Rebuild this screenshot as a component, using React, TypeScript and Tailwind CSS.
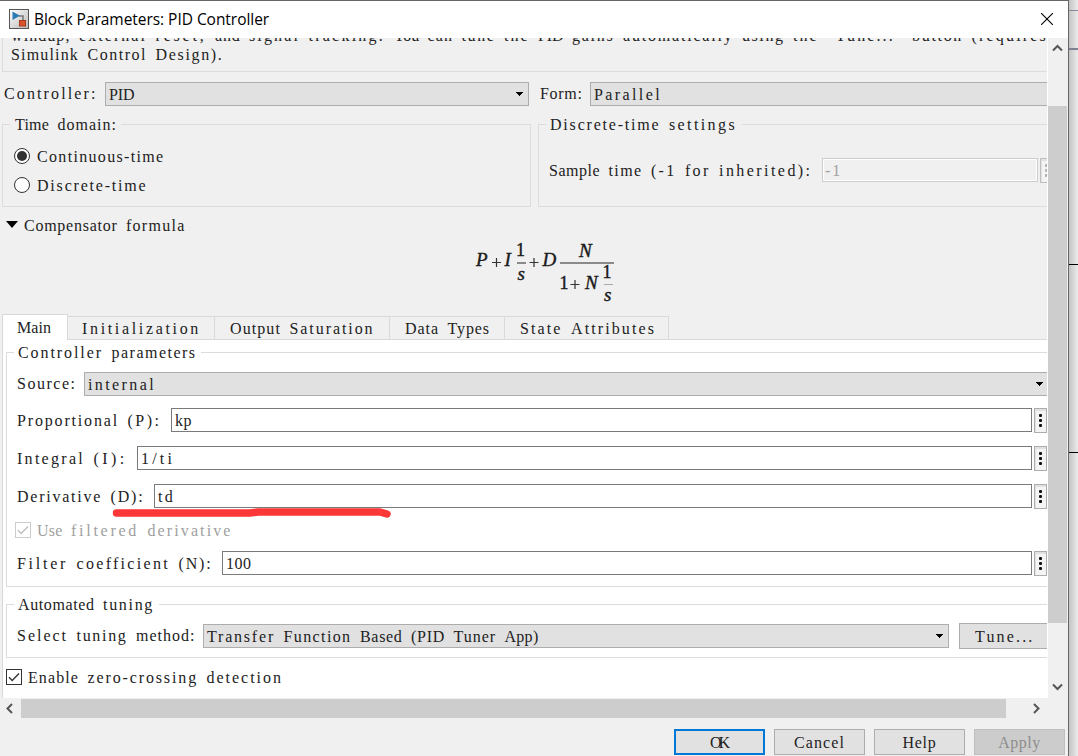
import React from 'react';

// Dialog text sits on a fixed character grid
const PITCH = 8.5;
const GRID_FONT = '16px "Liberation Serif", serif';

const ctx = document.createElement('canvas').getContext('2d')!;

const measure = (text: string) => {
  ctx.font = GRID_FONT;
  return ctx.measureText(text).width;
};

const Txt: React.FC<{ children: string; className?: string }> = ({ children, className = '' }) => {
  const words = children.split(' ');
  return (
    <span
      className={`block h-[19px] shrink-0 whitespace-pre font-['Liberation_Serif',serif] text-[16px] leading-[19px] ${className}`}
      style={{ wordSpacing: PITCH - measure(' ') }}
    >
      {words.map((word, i) => (
        <React.Fragment key={i}>
          {i > 0 && ' '}
          <span style={{ letterSpacing: (word.length * PITCH - measure(word)) / Math.max(word.length, 1) }}>{word}</span>
        </React.Fragment>
      ))}
    </span>
  );
};

const Arrow: React.FC = () => (
  <svg width="7" height="4" className="mt-[7px] shrink-0" shapeRendering="crispEdges">
    <path d="M0 0h7v1H0zM1 1h5v1H1zM2 2h3v1H2zM3 3h1v1H3z" fill="#000" />
  </svg>
);

const Combo: React.FC<{ value: string; className: string }> = ({ value, className }) => (
  <div className={`flex h-6 shrink-0 justify-between border border-[#adadad] bg-[#e1e1e1] pl-[3px] pr-[5px] pt-[2px] ${className}`}>
    <Txt>{value}</Txt>
    <Arrow />
  </div>
);

const Dots: React.FC<{ disabled?: boolean }> = ({ disabled }) => (
  <div
    className={`flex h-[25px] w-[13px] shrink-0 flex-col items-center gap-[2px] border bg-[#f4f4f4] pt-[5px] shadow-[inset_1px_2px_0_#e1e1e1] ${
      disabled ? 'border-[#bfbfbf] text-[#b0b0b0]' : 'border-[#adadad] text-[#111]'
    }`}
  >
    <i className="h-[3px] w-[3px] rounded-[1px] bg-current" />
    <i className="h-[3px] w-[3px] rounded-[1px] bg-current" />
    <i className="h-[3px] w-[3px] rounded-[1px] bg-current" />
  </div>
);

const ParamRow: React.FC<{ label: string; value: string; labelClass: string; className?: string }> = ({
  label,
  value,
  labelClass,
  className = '',
}) => (
  <div className={`flex h-[25px] w-[1037px] ${className}`}>
    <Txt className={`pt-[3px] ${labelClass}`}>{label}</Txt>
    <div className="h-6 flex-1 border border-[#7a7a7a] bg-white pl-[3px] pt-[2px]">
      <Txt>{value}</Txt>
    </div>
    <div className="ml-[2px]">
      <Dots />
    </div>
  </div>
);

const Radio: React.FC<{ label: string; checked?: boolean; className?: string }> = ({ label, checked, className = '' }) => (
  <div className={`flex h-[19px] pl-[11px] ${className}`}>
    <div className="mt-px flex h-4 w-4 items-center justify-center rounded-full border border-[#333] bg-white">
      {checked && <div className="h-[10px] w-[10px] rounded-full bg-[#333]" />}
    </div>
    <Txt className="ml-[7px]">{label}</Txt>
  </div>
);

const Check: React.FC<{ label: string; disabled?: boolean; className: string }> = ({ label, disabled, className }) => (
  <div className={`flex h-[19px] ${className} ${disabled ? 'text-[#a0a0a0]' : ''}`}>
    <div className={`mt-px h-4 w-4 border bg-white ${disabled ? 'border-[#ccc] text-[#bfbfbf]' : 'border-[#333] text-[#333]'}`}>
      <svg width="14" height="14" fill="none" stroke="currentColor" strokeWidth="1.4">
        <path d="M2 7.2l3.2 3.3L12 3.5" />
      </svg>
    </div>
    <Txt className="ml-[6px]">{label}</Txt>
  </div>
);

const DialogButton: React.FC<{ label: string; className: string }> = ({ label, className }) => (
  <button className={`flex h-[26px] w-[91px] items-center justify-center ${className}`}>
    <Txt>{label}</Txt>
  </button>
);

const Chevron: React.FC<{ d: string; className: string }> = ({ d, className }) => (
  <svg width="11" height="11" fill="none" stroke="#555" strokeWidth="2" className={className}>
    <path d={d} />
  </svg>
);

const Formula: React.FC = () => (
  <svg width="150" height="70" className="ml-[470px] font-['Liberation_Serif',serif] text-[19px]" fill="#1a1a1a" stroke="#1a1a1a" strokeWidth="0.4">
    <g fontStyle="italic">
      <text x="6" y="31">P</text>
      <text x="34.5" y="31">I</text>
      <text x="47.500" y="45">s</text>
      <text x="72.500" y="31">D</text>
      <text x="109" y="22">N</text>
      <text x="115" y="54">N</text>
      <text x="134" y="66">s</text>
    </g>
    <text x="46" y="21" fontSize="18">1</text>
    <text x="89.500" y="54" fontSize="18">1</text>
    <text x="132.500" y="43" fontSize="18">1</text>
    <g stroke="#333" strokeWidth="1.200">
      <path d="M22 27.500h9M26.500 23v9M59.500 27.500h9M64 23v9M100.500 49.500h9M105 45v9" />
    </g>
    <path d="M47 28h9M90 28h54" stroke="#8a8a8a" strokeWidth="2" />
    <path d="M134 49.500h9" stroke="#aaa" strokeWidth="1" />
  </svg>
);

const TABS = [
  { label: 'Initialization', className: 'w-[147px] pl-[14px]' },
  { label: 'Output Saturation', className: 'w-[175px] pl-[15px]' },
  { label: 'Data Types', className: 'w-[115px] pl-[15px]' },
  { label: 'State Attributes', className: 'w-[164px] pl-[15px]' },
];

export default function App() {
  return (
    <div className="flex h-[756px] w-[1078px] overflow-hidden bg-[#e8e8e8] text-[#222]">
      {/* Dialog window */}
      <div className="relative flex w-[1069px] shrink-0 flex-col border-r border-t border-[#666] bg-[#f0f0f0]">
        {/* Title bar */}
        <div className="flex h-[37px] shrink-0 bg-white">
          <svg width="20" height="20" className="ml-[9px] mt-[8px]">
            <defs>
              <linearGradient id="face" x1="0" y1="0" x2="1" y2="1">
                <stop offset="0" stopColor="#fff" />
                <stop offset="1" stopColor="#b8b8b8" />
              </linearGradient>
            </defs>
            <rect x="0.500" y="0.500" width="19" height="19" fill="url(#face)" stroke="#555" />
            <path d="M10 7h4v4" fill="none" stroke="#777" strokeWidth="1.500" />
            <path d="M3.500 2.500v8.500l7.500-4.200z" fill="#2b7bb5" />
            <rect x="10.500" y="11.500" width="6" height="5.500" fill="#d9532c" stroke="#a8371a" />
          </svg>
          <span className="ml-[5px] mt-[7px] whitespace-nowrap font-['Open_Sans',sans-serif] text-[15.500px] leading-[22px] tracking-[-0.040px] text-black">
            Block Parameters: PID Controller
          </span>
          <svg width="12" height="12" className="ml-auto mr-[15px] mt-[12px]" stroke="#000" strokeWidth="1.100">
            <path d="M0 0l12 12M12 0L0 12" />
          </svg>
        </div>

        <div className="flex h-[660px] shrink-0">
          {/* Scrolled content */}
          <div className="h-[660px] w-[1047px] shrink-0 overflow-hidden">
            <div className="ml-[2px] h-[34px] w-[1060px] overflow-hidden border-b border-l border-[#dcdcdc] pl-2">
              <Txt className="-mt-[12px]">{'windup, external reset, and signal tracking. You can tune the PID gains automatically using the "Tune..." button (requires'}</Txt>
              <Txt>Simulink Control Design).</Txt>
            </div>

            <div className="mt-[10px] flex h-6 w-[1060px]">
              <Txt className="w-[105px] pl-[4px] pt-[2px]">Controller:</Txt>
              <Combo value="PID" className="w-[424px]" />
              <Txt className="w-[61px] pl-[11px] pt-[2px]">Form:</Txt>
              <Combo value="Parallel" className="w-[480px]" />
            </div>

            <div className="mt-[9px] flex w-[1100px]">
              <fieldset className="ml-[2px] h-[92px] w-[529px] shrink-0 border border-[#dcdcdc]">
                <legend className="ml-[7px] h-[19px] w-[111px] pl-[5px]">
                  <Txt>Time domain:</Txt>
                </legend>
                <Radio label="Continuous-time" checked className="mt-[13px]" />
                <Radio label="Discrete-time" className="mt-[10px]" />
              </fieldset>
              <fieldset className="ml-[7px] h-[92px] w-[540px] shrink-0 border border-[#dcdcdc]">
                <legend className="ml-[7px] h-[19px] w-[196px] pl-[4px]">
                  <Txt>Discrete-time settings</Txt>
                </legend>
                <div className="mt-[24px] flex">
                  <Txt className="w-[283px] pl-[10px] pt-[3px]">Sample time (-1 for inherited):</Txt>
                  <div className="h-6 w-[216px] border border-[#ccc] bg-[#f0f0f0] pl-[2px] pt-[2px] text-[#a0a0a0] shadow-[inset_0_0_0_1px_white]">
                    <Txt>-1</Txt>
                  </div>
                  <div className="ml-[2px]">
                    <Dots disabled />
                  </div>
                </div>
              </fieldset>
            </div>

            <div className="mt-[9px] flex h-[19px]">
              <svg width="12" height="7" className="ml-[6px] mt-[5px]">
                <path d="M0 0h12L6 7z" fill="#000" />
              </svg>
              <Txt className="ml-[6px]">Compensator formula</Txt>
            </div>

            <Formula />

            {/* Tabs */}
            <div className="mt-[9px] flex h-[26px] items-end pl-[2px]">
              <div className="h-[26px] w-[66px] border border-b-0 border-[#d9d9d9] bg-white pl-[14px] pt-[3px]">
                <Txt>Main</Txt>
              </div>
              {TABS.map((tab) => (
                <div key={tab.label} className={`h-[24px] border-b border-r border-t border-[#d9d9d9] pt-[2px] ${tab.className}`}>
                  <Txt>{tab.label}</Txt>
                </div>
              ))}
              <div className="h-px flex-1 bg-[#d9d9d9]" />
            </div>

            <div className="ml-[2px] h-[358px] w-[1060px] border-l border-[#d9d9d9] bg-white pl-[3px] pt-[3px]">
              <fieldset className="h-[244px] w-[1060px] border border-[#dcdcdc] pl-[3px]">
                <legend className="ml-[4px] h-[19px] w-[187px] pl-[4px]">
                  <Txt>Controller parameters</Txt>
                </legend>
                <div className="mt-[10px] flex h-6">
                  <Txt className="w-[74px] pl-[7px] pt-[2px]">Source:</Txt>
                  <Combo value="internal" className="w-[965px]" />
                </div>
                <ParamRow label="Proportional (P):" value="kp" labelClass="w-[161px] pl-[7px]" className="mt-[12px]" />
                <ParamRow label="Integral (I):" value="1/ti" labelClass="w-[127px] pl-[7px]" className="mt-[13px]" />
                <ParamRow label="Derivative (D):" value="td" labelClass="w-[144px] pl-[7px]" className="mt-[13px]" />
                <Check label="Use filtered derivative" disabled className="mt-[12px] pl-[5px]" />
                <ParamRow label="Filter coefficient (N):" value="100" labelClass="w-[212px] pl-[7px]" className="mt-[11px]" />
              </fieldset>

              <fieldset className="mt-[8px] h-[63px] w-[1060px] border border-[#dcdcdc] pl-[3px]">
                <legend className="ml-[4px] h-[19px] w-[145px] pl-[4px]">
                  <Txt>Automated tuning</Txt>
                </legend>
                <div className="mt-[9px] flex h-[26px]">
                  <Txt className="w-[193px] pl-[7px] pt-[3px]">Select tuning method:</Txt>
                  <Combo value="Transfer Function Based (PID Tuner App)" className="mt-px w-[746px]" />
                  <button className="ml-[10px] h-[26px] w-[100px] border border-[#adadad] bg-[#e1e1e1] pl-[15px]">
                    <Txt className="text-left">Tune...</Txt>
                  </button>
                </div>
              </fieldset>

              <Check label="Enable zero-crossing detection" className="mt-[10px]" />
            </div>
          </div>

          {/* Vertical scrollbar */}
          <div className="flex w-[20px] flex-col items-center border-l border-white">
            <Chevron d="M1 8.500L5.500 4l4.500 4.500" className="mt-[4px]" />
            <div className="mt-[53px] h-[517px] w-[19px] bg-[#cdcdcd]" />
            <Chevron d="M1 3.500L5.500 8l4.500-4.500" className="mt-[58px]" />
          </div>
        </div>

        {/* Horizontal scrollbar */}
        <div className="mt-px flex h-[19px] shrink-0 items-center">
          <Chevron d="M8 1L3.500 5.500L8 10" className="ml-[4px]" />
          <div className="ml-[6px] h-[19px] w-[985px] bg-[#cdcdcd]" />
          <Chevron d="M3 1l4.500 4.500L3 10" className="ml-[25px]" />
        </div>

        {/* Footer */}
        <div className="mt-[11px] flex justify-end gap-[9px] pr-[3px]">
          <DialogButton label="OK" className="border-2 border-[#0078d7] bg-[#e1e1e1] pr-[2px]" />
          <DialogButton label="Cancel" className="border border-[#adadad] bg-[#e1e1e1]" />
          <DialogButton label="Help" className="border border-[#adadad] bg-[#e1e1e1]" />
          <DialogButton label="Apply" className="border border-[#bfbfbf] bg-[#ccc] text-[#8c8c8c]" />
        </div>

        {/* Marker stroke under the derivative field */}
        <svg width="290" height="16" className="absolute left-[108px] top-[503px]" fill="none" stroke="#fb3737" strokeLinecap="round" strokeLinejoin="round">
          <path d="M8.500 9H142L150 8H272L279 10" strokeWidth="7.500" />
        </svg>
      </div>

      {/* Window behind the dialog */}
      <div className="flex flex-1 flex-col bg-linear-to-r from-[#c4c4c4] to-[#ececec]">
        <div className="mt-[10px] h-px bg-[#8a8a9a]" />
        <div className="mt-[37px] h-[2px] bg-[#7d8290]" />
        <div className="mt-[214px] h-px bg-black" />
        <div className="mt-[187px] h-px bg-black" />
      </div>
    </div>
  );
}
